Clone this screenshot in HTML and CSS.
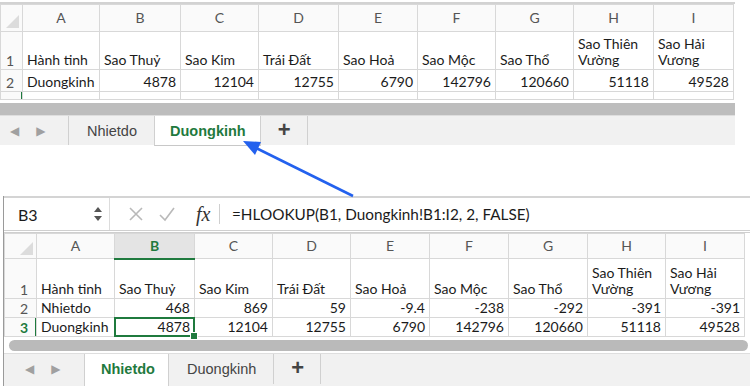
FILE: index.html
```html
<!DOCTYPE html>
<html lang="vi">
<head>
    <title>HLOOKUP giữa hai trang tính</title>
    <meta charset="UTF-8">
    <link rel="stylesheet" href="styles.css">
</head>
<body>

<!-- Trang tính Duongkinh -->
<div class="sheet sheet-top">
    <table class="grid">
        <colgroup>
            <col class="c-row"><col style="width:77px"><col style="width:81px"><col style="width:78px"><col style="width:80px">
            <col style="width:79px"><col style="width:78px"><col style="width:78px"><col style="width:80px"><col style="width:80px">
        </colgroup>
        <tr class="hdr">
            <th class="corner"></th><th>A</th><th>B</th><th>C</th><th>D</th><th>E</th><th>F</th><th>G</th><th>H</th><th>I</th>
        </tr>
        <tr class="r-tall">
            <th>1</th><td>Hành tinh</td><td>Sao Thuỷ</td><td>Sao Kim</td><td>Trái Đất</td><td>Sao Hoả</td>
            <td>Sao Mộc</td><td>Sao Thổ</td><td>Sao Thiên<br>Vường</td><td>Sao Hải<br>Vương</td>
        </tr>
        <tr class="r-data">
            <th>2</th><td>Duongkinh</td><td class="num">4878</td><td class="num">12104</td><td class="num">12755</td>
            <td class="num">6790</td><td class="num">142796</td><td class="num">120660</td><td class="num">51118</td><td class="num">49528</td>
        </tr>
        <tr class="r-cut">
            <th class="row-sel"></th><td></td><td></td><td></td><td></td><td></td><td></td><td></td><td></td><td></td>
        </tr>
    </table>
    <div class="hscroll"></div>
    <div class="tabs">
        <div class="nav"><span>◀</span><span>▶</span></div>
        <div class="tab">Nhietdo</div>
        <div class="tab active">Duongkinh</div>
        <div class="tab add">+</div>
    </div>
</div>

<div class="between"></div>

<!-- Trang tính Nhietdo -->
<div class="sheet sheet-bottom">
    <div class="fbar">
        <div class="namebox">
            <span>B3</span>
            <svg class="spin" width="8" height="16" viewBox="0 0 8 16">
                <polygon points="4,1 8,6 0,6" fill="#555"/>
                <polygon points="0,10 8,10 4,15" fill="#555"/>
            </svg>
        </div>
        <div class="fbtns">
            <svg width="16" height="16" viewBox="0 0 16 16">
                <path d="M2 2 L14 14 M14 2 L2 14" stroke="#b9b9b9" stroke-width="1.6" fill="none"/>
            </svg>
            <svg width="18" height="16" viewBox="0 0 18 16">
                <path d="M2 9 L7 14 L16 2" stroke="#b9b9b9" stroke-width="1.6" fill="none"/>
            </svg>
            <span class="fx">fx</span>
        </div>
        <div class="formula">=HLOOKUP(B1, Duongkinh!B1:I2, 2, FALSE)</div>
    </div>
    <table class="grid">
        <colgroup>
            <col class="c-row2"><col style="width:78px"><col style="width:80px"><col style="width:78px"><col style="width:78px">
            <col style="width:79px"><col style="width:79px"><col style="width:79px"><col style="width:78px"><col style="width:79px">
        </colgroup>
        <tr class="hdr">
            <th class="corner"></th><th>A</th><th class="col-sel">B</th><th>C</th><th>D</th><th>E</th><th>F</th><th>G</th><th>H</th><th>I</th>
        </tr>
        <tr class="r-tall">
            <th>1</th><td>Hành tinh</td><td>Sao Thuỷ</td><td>Sao Kim</td><td>Trái Đất</td><td>Sao Hoả</td>
            <td>Sao Mộc</td><td>Sao Thổ</td><td>Sao Thiên<br>Vường</td><td>Sao Hải<br>Vương</td>
        </tr>
        <tr class="r-data">
            <th>2</th><td>Nhietdo</td><td class="num">468</td><td class="num">869</td><td class="num">59</td>
            <td class="num">-9.4</td><td class="num">-238</td><td class="num">-292</td><td class="num">-391</td><td class="num">-391</td>
        </tr>
        <tr class="r-data">
            <th class="row-sel">3</th><td>Duongkinh</td><td class="num active-cell">4878</td><td class="num">12104</td><td class="num">12755</td>
            <td class="num">6790</td><td class="num">142796</td><td class="num">120660</td><td class="num">51118</td><td class="num">49528</td>
        </tr>
    </table>
    <div class="hscroll"></div>
    <div class="tabs">
        <div class="nav"><span>◀</span><span>▶</span></div>
        <div class="tab active">Nhietdo</div>
        <div class="tab">Duongkinh</div>
        <div class="tab add">+</div>
    </div>
</div>

<!-- Mũi tên chỉ sang trang Duongkinh -->
<svg class="arrow" width="750" height="386" viewBox="0 0 750 386">
    <line x1="353" y1="196" x2="254" y2="147" stroke="#2361ee" stroke-width="2.6"/>
    <polygon points="243,141 261,142 255,155" fill="#2361ee"/>
</svg>

</body>
</html>
```

FILE: styles.css
```css
* { box-sizing: border-box; }
html { overflow: hidden; }
body { margin: 0; width: 750px; height: 386px; overflow: hidden; position: relative; background: #fff; font-family: Lato, "Open Sans", sans-serif; color: #1b1b1b; }

.sheet-top { width: 735px; margin-top: 2px; border-top: 2px solid #d2d2d2; }
.sheet-bottom { width: 747px; margin-left: 3px; border-left: 1px solid #9a9a9a; }
.between { height: 51px; }

/* lưới ô */
.grid { border-collapse: collapse; table-layout: fixed; width: 733px; }
.sheet-bottom .grid { width: 740px; }
.c-row { width: 22px; }
.c-row2 { width: 32px; }
.grid th, .grid td { border: 1px solid #d8d8d8; padding: 0 4px; font-size: 14px; white-space: nowrap; overflow: hidden; vertical-align: bottom; line-height: 16px; }
.grid td { padding-bottom: 1px; }
.grid th { font-weight: normal; color: #555; text-align: left; padding-left: 5px; background: #fafafa; }
.sheet-bottom .grid th { padding-left: 15px; }
.grid .hdr th { text-align: center; vertical-align: middle; color: #555; font-size: 14px; padding-left: 4px; }
.grid td.num { text-align: right; }
.hdr { height: 27px; }
.r-tall { height: 38px; }
.r-data { height: 22px; }
.r-cut { height: 8px; }
.sheet-bottom .r-tall { height: 40px; }
.sheet-bottom .r-data { height: 19px; }
.sheet-bottom .hdr { height: 25px; }

.corner { position: relative; }
.corner::after { content: ""; position: absolute; right: 3px; bottom: 3px; border-left: 13px solid transparent; border-bottom: 13px solid #dcdcdc; }
.grid .hdr th.col-sel { background: #e4e4e4; color: #1f7a3e; font-weight: bold; border-bottom: 2px solid #1f7a3e; }
.grid th.row-sel { color: #1f7a3e; font-weight: bold; position: relative; }
.row-sel::after { content: ""; position: absolute; right: -1px; top: 0; bottom: 0; width: 2px; background: #1f7a3e; }
.grid td.active-cell { position: relative; overflow: visible; }
.active-cell::before { content: ""; position: absolute; left: -1px; top: -1px; right: -1px; bottom: -1px; border: 2px solid #1f7a3e; }
.active-cell::after { content: ""; position: absolute; right: -4px; bottom: -4px; width: 6px; height: 6px; background: #1f7a3e; border: 1px solid #fff; }

/* thanh cuộn ngang */
.hscroll { height: 12px; margin-top: 3px; background: #bdbdbd; }
.sheet-bottom .hscroll { margin: 3px 2px 0 5px; height: 11px; border-radius: 6px; background: #bababa; }

/* thẻ trang tính */
.tabs { display: flex; height: 30px; background: #f1f1f1; border-top: 1px solid #dedede; font-family: "Liberation Sans", Arial, sans-serif; font-size: 14.5px; color: #444; }
.tabs > * { flex-shrink: 0; }
.sheet-bottom .tabs { height: 36px; margin-top: 2px; align-items: flex-start; }
.sheet-bottom .tabs > * { height: 30px; }
.nav { width: 68px; display: flex; align-items: center; gap: 17px; padding-left: 10px; font-family: "DejaVu Sans", sans-serif; font-size: 12px; color: #a0a0a0; }
.sheet-bottom .nav { width: 80px; padding-left: 21px; }
.tab { display: flex; align-items: center; padding: 0 17px 0 18px; border-left: 1px solid #d0d0d0; }
.tab.active { background: #fff; color: #1f7a3e; font-weight: bold; border-bottom: 1px solid #c8c8c8; margin-bottom: -1px; border-right: 1px solid #d0d0d0; padding: 0 14px 0 15px; }
.sheet-bottom .tabs > .tab.active { height: 35px; padding: 0 13px 5px 16px; border-bottom: none; }
.tab.add { font-size: 22px; font-weight: bold; color: #444; padding: 0 16px 2px 17px; border-right: 1px solid #d0d0d0; }
.tab.active + .tab { border-left: none; }

/* thanh công thức */
.fbar { display: flex; height: 37px; border-top: 2px solid #d4d4d4; border-bottom: 3px double #cfcfcf; align-items: center; }
.namebox { width: 106px; height: 100%; display: flex; align-items: center; justify-content: space-between; padding: 0 7px 0 14px; border-right: 1px solid #dcdcdc; font-size: 16px; }
.fbtns { display: flex; align-items: center; gap: 14px; padding-left: 18px; width: 115px; }
.fx { font-family: "Liberation Serif", serif; font-style: italic; font-size: 20px; color: #333; padding: 0 9px 0 6px; border-right: 1px solid #cfcfcf; line-height: 20px; }
.formula { padding-left: 7px; font-size: 15.3px; color: #1b1b1b; }

.arrow { position: absolute; left: 0; top: 0; pointer-events: none; }
```
